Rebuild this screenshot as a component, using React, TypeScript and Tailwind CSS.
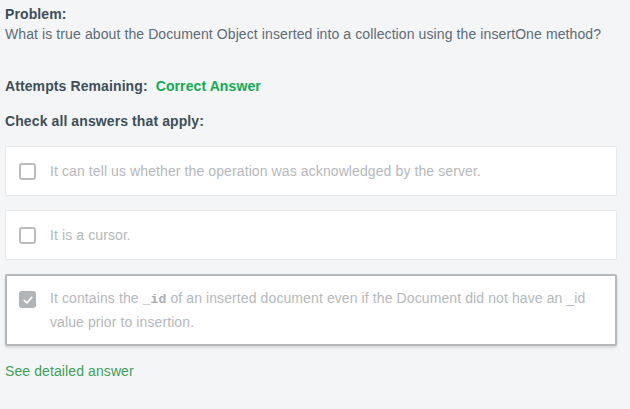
import React from "react";

const answers = [
  { id: 1, checked: false, text: <>It can tell us whether the operation was acknowledged by the server.</> },
  { id: 2, checked: false, text: <>It is a cursor.</> },
  {
    id: 3,
    checked: true,
    text: (
      <>
        <span>
          It contains the{" "}
          <code className="font-['Liberation_Mono',monospace] text-[13px] font-bold text-[#a9acae]">_id</code> of an
          inserted document even if the Document did not have an _id
        </span>
        <br />
        <span>value prior to insertion.</span>
      </>
    ),
  },
];

const CheckBox = ({ checked }: { checked: boolean }) => {
  if (checked) {
    return (
      <div className="mt-[4px] flex h-[17px] w-[17px] shrink-0 items-center justify-center rounded-[3px] bg-[#b2b5b8]">
        <svg viewBox="0 0 16 16" className="h-[12px] w-[12px]">
          <path d="M3 8.5 L6.5 12 L13 4.5" fill="none" stroke="white" strokeWidth="2.2" strokeLinecap="round" strokeLinejoin="round" />
        </svg>
      </div>
    );
  }
  return <div className="mt-[3px] h-[17px] w-[17px] shrink-0 rounded-[3px] border-2 border-[#b9bbbd] bg-white" />;
};

const App = () => {
  return (
    <div className="h-[409px] w-[630px] overflow-hidden bg-[#f4f5f7] pl-[5px] pr-[13px] pt-[5px] font-['Liberation_Sans',Arial,sans-serif] text-[14px] tracking-[0.1px]">
      <div className="font-bold leading-[19px] text-[#3d4f58]">Problem:</div>
      <div className="leading-[20px] text-[#5d6c74]">
        What is true about the Document Object inserted into a collection using the insertOne method?
      </div>

      <div className="mt-[33px] flex gap-[8px] font-bold leading-[19px]">
        <span className="text-[#3d4f58]">Attempts Remaining:</span>
        <span className="text-[#13aa52]">Correct Answer</span>
      </div>

      <div className="mt-[16px] font-bold leading-[19px] text-[#3d4f58]">Check all answers that apply:</div>

      <div className="mt-[15px] flex flex-col gap-[14px]">
        {answers.map((a) => (
          <div
            key={a.id}
            className={
              a.checked
                ? "flex gap-[14px] rounded-[2px] border-2 border-[#b6b9bc] bg-white py-[11px] pl-[12px] pr-[20px] shadow-[0_2px_3px_rgba(0,0,0,0.12)]"
                : "flex gap-[14px] rounded-[2px] border border-[#e7e9eb] bg-white py-[13px] pl-[13px] pr-[20px]"
            }
          >
            <CheckBox checked={a.checked} />
            <p className="leading-[22px] whitespace-nowrap text-[#b5b8ba]">{a.text}</p>
          </div>
        ))}
      </div>

      <div className="mt-[15px] leading-[20px] text-[#3e9f5b]">See detailed answer</div>
    </div>
  );
};

export default App;
